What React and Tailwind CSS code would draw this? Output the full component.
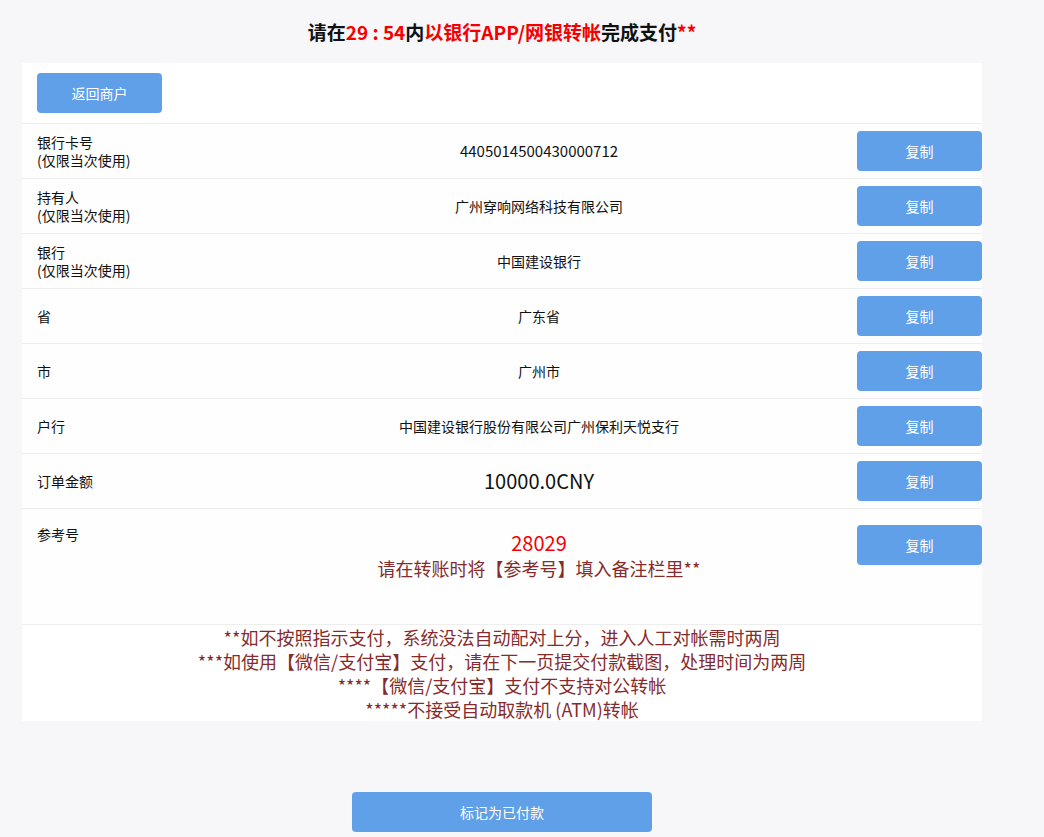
const FONT = { fontFamily: '"Microsoft YaHei", "Noto Sans CJK SC", "Noto Sans", sans-serif' }

const rows = [
  { label: '银行卡号', sub: '(仅限当次使用)', value: '4405014500430000712', cls: 'text-[15px]' },
  { label: '持有人', sub: '(仅限当次使用)', value: '广州穿响网络科技有限公司', cls: 'text-[14px]' },
  { label: '银行', sub: '(仅限当次使用)', value: '中国建设银行', cls: 'text-[14px]' },
  { label: '省', value: '广东省', cls: 'text-[14px]' },
  { label: '市', value: '广州市', cls: 'text-[14px]' },
  { label: '户行', value: '中国建设银行股份有限公司广州保利天悦支行', cls: 'text-[14px]' },
  { label: '订单金额', value: '10000.0CNY', cls: 'text-[20px]' },
]

function CopyButton() {
  return (
    <button
      type="button"
      className="w-[125px] h-10 shrink-0 rounded-[4px] bg-[#60a0e9] text-white text-[14px]"
    >
      复制
    </button>
  )
}

export default function App() {
  return (
    <div className="min-h-[837px] bg-[#f7f6f8] text-[#111]" style={FONT}>
      <div className="w-[1004px]">
        <h1 className="h-[63px] pt-[17px] text-center text-[19px] font-bold leading-[30px]">
          请在<span className="text-[#f40000]">29 : 54</span>内<span className="text-[#f40000]">以银行APP/网银转帐</span>完成支付<span className="text-[#f40000]">**</span>
        </h1>

        <div className="mx-auto w-[960px] bg-white">
          <div className="h-[61px] pl-[15px] pt-[10px] border-b border-[#eeeeee]">
            <button type="button" className="w-[125px] h-10 rounded-[4px] bg-[#60a0e9] text-white text-[14px]">
              返回商户
            </button>
          </div>

          {rows.map((r) => (
            <div key={r.label} className="flex items-center h-[55px] border-b border-[#eeeeee] bg-[#fefefe]">
              <div className="w-[199px] pl-[15px] text-[14px] leading-[18px]">
                <div>{r.label}</div>
                {r.sub && <div>{r.sub}</div>}
              </div>
              <div className={`flex-1 text-center ${r.cls}`}>{r.value}</div>
              <CopyButton />
            </div>
          ))}

          <div className="flex items-start h-[116px] pt-4 border-b border-[#eeeeee] bg-[#fefefe]">
            <div className="w-[199px] pl-[15px] text-[14px] leading-[18px]">参考号</div>
            <div className="flex-1 text-center pt-[5px]">
              <div className="text-[20px] leading-[26px] text-[#f40000]">28029</div>
              <div className="text-[18px] leading-[24px] text-[#862b2b]">请在转账时将【参考号】填入备注栏里**</div>
            </div>
            <CopyButton />
          </div>

          <div className="text-center text-[18px] leading-[24px] text-[#862b2b]">
            <p>**如不按照指示支付，系统没法自动配对上分，进入人工对帐需时两周</p>
            <p>***如使用【微信/支付宝】支付，请在下一页提交付款截图，处理时间为两周</p>
            <p>****【微信/支付宝】支付不支持对公转帐</p>
            <p>*****不接受自动取款机 (ATM)转帐</p>
          </div>
        </div>

        <div className="flex justify-center pt-[71px]">
          <button type="button" className="w-[300px] h-10 rounded-[4px] bg-[#60a0e9] text-white text-[14px]">
            标记为已付款
          </button>
        </div>
      </div>
    </div>
  )
}
